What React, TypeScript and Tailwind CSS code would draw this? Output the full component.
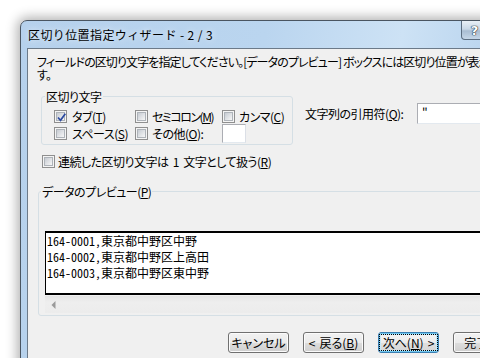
import type { ReactNode } from "react";

function Check({ checked }: { checked?: boolean }) {
  return (
    <span className="relative flex h-[13px] w-[13px] shrink-0 items-center justify-center border border-[#8f8f8f] bg-[#f4f4f4]">
      <span className="h-[9px] w-[9px] border border-[#aeb3b9] bg-[linear-gradient(135deg,#c6cbd2,#f7f7f7)]" />
      {checked && (
        <svg className="absolute left-[1px] top-[1px]" width="11" height="11" viewBox="0 0 11 11">
          <path d="M2 5.5 L4.5 8.3 L9.3 1.8" fill="none" stroke="#2c4aa0" strokeWidth="1.7" />
        </svg>
      )}
    </span>
  );
}

function Option({
  checked,
  children,
  gap = "gap-[5px]",
  tight,
}: {
  checked?: boolean;
  children: ReactNode;
  gap?: string;
  tight?: boolean;
}) {
  return (
    <div className={`flex h-[17px] items-center ${gap}`}>
      <Check checked={checked} />
      <span className={tight ? "whitespace-nowrap tracking-[-1.5px]" : "whitespace-nowrap"}>{children}</span>
    </div>
  );
}

function Btn({ children, focused }: { children: ReactNode; focused?: boolean }) {
  if (focused) {
    return (
      <div className="flex h-[21px] w-[61px] shrink-0 items-center justify-center rounded-[3px] border border-[#3c7fb1] bg-[linear-gradient(#f4f4f4_0%,#ececec_50%,#dfdfdf_51%,#d6d6d6_100%)] shadow-[inset_0_0_0_1px_#6fc8f2,inset_0_0_0_2px_#c5e9f9]">
        <span className="whitespace-nowrap px-[3px] py-[1px] leading-[13px] outline-1 outline-dotted outline-black">
          {children}
        </span>
      </div>
    );
  }
  return (
    <div className="flex h-[21px] w-[61px] shrink-0 items-center justify-center rounded-[3px] border border-[#707070] bg-[linear-gradient(#f2f2f2_0%,#ebebeb_50%,#dddddd_51%,#cfcfcf_100%)] shadow-[inset_0_0_0_1px_#fbfbfb]">
      <span className="whitespace-nowrap">{children}</span>
    </div>
  );
}

export default function App() {
  const rows = [
    ["164-0001,", "東京都中野区中野"],
    ["164-0002,", "東京都中野区上高田"],
    ["164-0003,", "東京都中野区東中野"],
  ];

  return (
    <div className="h-[358px] w-[480px] overflow-hidden bg-white pl-[20px] pt-[20px] font-['Noto_Sans_CJK_JP',sans-serif] text-[12px] leading-[14px] text-black">
      <div className="flex h-[400px] w-[480px] flex-col rounded-tl-[7px] border border-[#4a5561] bg-[linear-gradient(100deg,#b6d1ec_0%,#bad5ef_45%,#cde2f5_70%,#bcd6ef_85%,#cfe3f6_100%)] shadow-[0_0_12px_3px_rgba(0,0,0,0.3)]">
        {/* title bar */}
        <div className="flex h-[27px] shrink-0 items-center pl-[7px] pr-[11px]">
          <span className="flex-1 whitespace-nowrap text-[12px] leading-[14px] tracking-[0.4px] [text-shadow:0_0_6px_rgba(255,255,255,0.9)]">
            区切り位置指定ウィザード - 2 / 3
          </span>
          <div className="flex h-[19px] w-[27px] self-start items-center justify-center rounded-b-[4px] border border-t-0 border-[#5b6d80] bg-[linear-gradient(#e9f0f7,#c9d8e7_45%,#a9bdd2_55%,#c5d7e8)]">
            <span className="font-['DejaVu_Sans',sans-serif] text-[13px] font-bold leading-[13px] text-white [text-shadow:0_0_1px_#1d2b3a,0_0_1px_#1d2b3a,0_0_1px_#1d2b3a]">
              ?
            </span>
          </div>
        </div>

        {/* client area */}
        <div className="ml-[6px] flex-1 border-l border-t border-[#6c7a89] bg-[#f0f0f0] tracking-[-0.5px] [font-feature-settings:'palt']">
          <p className="whitespace-nowrap pl-[9px] pt-[6px] leading-[13px] tracking-[-0.9px]">
            フィールドの区切り文字を指定してください。[データのプレビュー] ボックスには区切り位置が表示されま
            <br />
            す。
          </p>

          <div className="ml-[13px] mt-[9px] flex items-start">
            <fieldset className="w-[252px] shrink-0 rounded-[3px] border border-[#d5dfe5] pb-[2px] pt-[5px]">
              <legend className="ml-[3px] px-[1px] leading-[13px]">区切り文字</legend>
              <div className="grid grid-cols-[81px_87px_auto] pl-[12px]">
                <Option checked>
                  タブ(<u>T</u>)
                </Option>
                <Option gap="gap-[4px]" tight>
                  セミコロン(<u>M</u>)
                </Option>
                <Option gap="gap-[4px]">
                  カンマ(<u>C</u>)
                </Option>
                <Option>
                  スペース(<u>S</u>)
                </Option>
                <Option gap="gap-[4px]">
                  その他(<u>O</u>):
                </Option>
                <div className="flex h-[17px] items-center">
                  <div className="h-[19px] w-[24px] border border-[#abadb3] border-b-[#e3e9ef] border-r-[#dbdfe6] bg-white" />
                </div>
              </div>
            </fieldset>

            <div className="ml-[12px] mt-[13px] flex h-[21px] shrink-0 items-center">
              <span className="w-[112px] whitespace-nowrap">
                文字列の引用符(<u>Q</u>):
              </span>
              <div className="h-[21px] w-[100px] border border-[#abadb3] border-b-[#e3e9ef] bg-white pl-[4px] pt-[2px] leading-[12px]">
                "
              </div>
            </div>
          </div>

          <div className="ml-[14px] mt-[8px]">
            <Option gap="gap-[3px]">
              連続した区切り文字は<span className="px-[2px]"> 1 </span>文字として扱う(<u>R</u>)
            </Option>
          </div>

          <fieldset className="ml-[10px] mt-[15px] w-[470px] rounded-[3px] border border-[#d5dfe5] pb-[2px] pt-[33px]">
            <legend className="ml-[2px] px-[1px] leading-[13px]">
              データのプレビュー(<u>P</u>)
            </legend>
            <div className="pl-[6px]">
              <div className="h-[64px] border-b-2 border-l border-t-2 border-black bg-white pl-[1px] text-[12px] leading-[16px] tracking-normal">
                {rows.map(([code, addr]) => (
                  <div key={code} className="whitespace-nowrap">
                    <span className="[font-feature-settings:'hwid']">{code}</span>
                    <span className="[font-feature-settings:normal]">{addr}</span>
                  </div>
                ))}
              </div>
              <div className="mt-[1px] flex h-[17px] items-center bg-[linear-gradient(#e4e4e4,#eeeeee_35%,#ececec)] pl-[6px]">
                <svg width="5" height="8" viewBox="0 0 5 8">
                  <polygon points="4.5,0 0.5,4 4.5,8" fill="#9a9a9a" />
                </svg>
              </div>
            </div>
          </fieldset>

          <div className="ml-[200px] mt-[16px] flex gap-[14px] tracking-normal">
            <Btn>キャンセル</Btn>
            <Btn>
              &lt;<span className="ml-[4px]">戻る(<u>B</u>)</span>
            </Btn>
            <Btn focused>
              次へ(<u>N</u>)<span className="ml-[4px]">&gt;</span>
            </Btn>
            <Btn>完了(<u>F</u>)</Btn>
          </div>
        </div>
      </div>
    </div>
  );
}
